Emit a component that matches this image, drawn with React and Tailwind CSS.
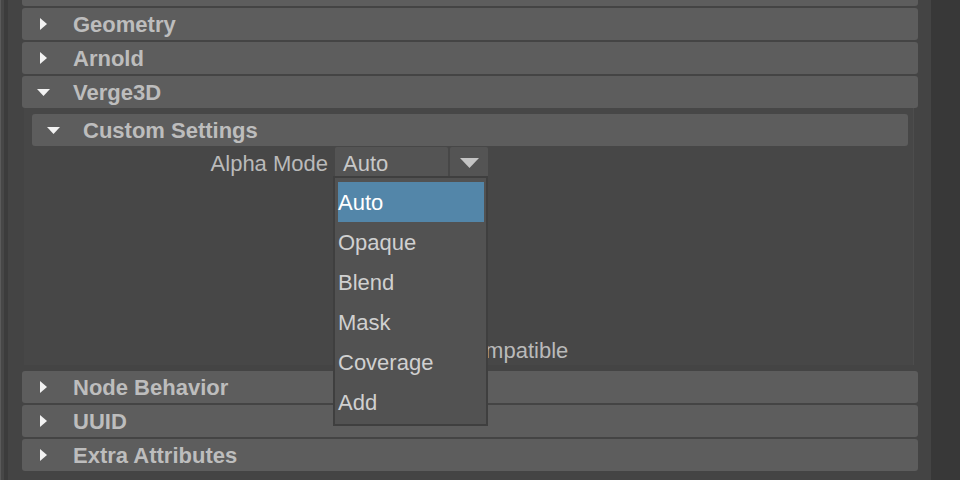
const FONT = { fontFamily: '"Liberation Sans", Arial, sans-serif' };

function Arrow({ open }) {
  return (
    <div className="flex w-[42px] items-center justify-center">
      {open ? (
        <svg width="13" height="7" viewBox="0 0 13 7">
          <path d="M0 0 L13 0 L6.5 7 Z" fill="#f2f2f2" />
        </svg>
      ) : (
        <svg width="7" height="12" viewBox="0 0 7 12">
          <path d="M0 0 L7 6 L0 12 Z" fill="#f2f2f2" />
        </svg>
      )}
    </div>
  );
}

function Header({ title, open = false, className = "" }) {
  return (
    <div
      className={`flex h-[32px] shrink-0 items-center rounded-[3px] bg-[#5d5d5d] ${className}`}
    >
      <Arrow open={open} />
      <span className="ml-[9px] pt-[1px] text-[22px] font-bold leading-none text-[#bdbdbd]">
        {title}
      </span>
    </div>
  );
}

const options = ["Auto", "Opaque", "Blend", "Mask", "Coverage", "Add"];

export default function App() {
  return (
    <div className="flex h-[480px] w-[960px] overflow-hidden bg-[#444444]" style={FONT}>
      <div className="w-[1px] bg-[#5a5a5a]" />
      <div className="w-[3px] bg-[#474747]" />
      <div className="w-[4px] bg-[#3c3c3c]" />

      <div className="flex w-[923px] flex-col gap-[2px] pl-[14px] pr-[13px]">
        <Header title="" className="mt-[-26px]" />
        <Header title="Geometry" />
        <Header title="Arnold" />
        <Header title="Verge3D" open />

        <div className="mb-[4px] ml-[2px] mr-[4px] mt-[-2px] flex h-[257px] shrink-0 flex-col border-r border-[#4d4d4d] bg-[#474747] pl-[8px] pr-[5px] pt-[6px]">
          <Header title="Custom Settings" open />

          <div className="relative mt-[1px] flex h-[32px] items-center">
            <div className="w-[296px] pt-[1px] text-right text-[22px] text-[#bababa]">Alpha Mode</div>
            <div className="ml-[7px] flex h-[32px] w-[113px] items-center rounded-[2px] bg-[#545454] pl-[8px] pt-[1px] text-[22px] text-[#c8c8c8]">
              Auto
            </div>
            <div className="ml-[2px] flex h-[32px] w-[38px] items-center justify-center rounded-[2px] bg-[#545454]">
              <svg width="19" height="10" viewBox="0 0 19 10">
                <path d="M0 0 L19 0 L9.5 10 Z" fill="#c4c4c4" />
              </svg>
            </div>

            <div className="absolute left-[301px] top-[29px] z-10 flex h-[250px] w-[155px] flex-col border-2 border-[#3f3f3f] bg-[#525252] pb-[2px] pl-[3px] pr-[2px] pt-[4px]">
              {options.map((o, i) => (
                <div
                  key={o}
                  className={`flex h-[40px] shrink-0 items-center pt-[1px] text-[22px] ${
                    i === 0 ? "bg-[#5386a9] text-white" : "text-[#d0d0d0]"
                  }`}
                >
                  {o}
                </div>
              ))}
            </div>
          </div>

          <div className="mt-[159px] flex h-[24px] items-center pl-[425px] text-[22px] text-[#bababa]">
            Compatible
          </div>
        </div>

        <Header title="Node Behavior" />
        <Header title="UUID" />
        <Header title="Extra Attributes" />
      </div>

      <div className="flex-1 bg-[#383838]" />
    </div>
  );
}
